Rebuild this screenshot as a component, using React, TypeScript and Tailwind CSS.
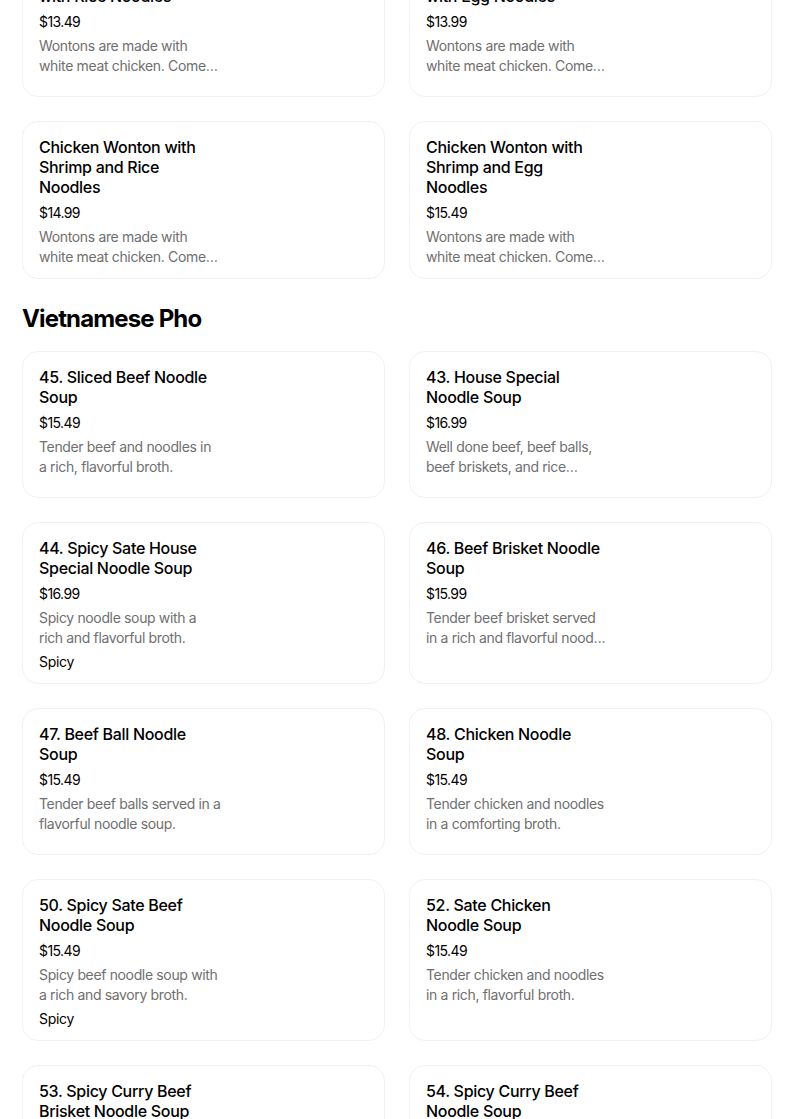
import React from "react";

interface Item {
  name: string;
  price: string;
  desc: string;
  tag?: string;
}

const topItems: Item[] = [
  {
    name: "Chicken Wonton Soup with Rice Noodles",
    price: "$13.49",
    desc: "Wontons are made with white meat chicken. Comes with bok choy and scallions.",
  },
  {
    name: "Chicken Wonton Soup with Egg Noodles",
    price: "$13.99",
    desc: "Wontons are made with white meat chicken. Comes with bok choy and scallions.",
  },
  {
    name: "Chicken Wonton with Shrimp and Rice Noodles",
    price: "$14.99",
    desc: "Wontons are made with white meat chicken. Comes with shrimp and bok choy.",
  },
  {
    name: "Chicken Wonton with Shrimp and Egg Noodles",
    price: "$15.49",
    desc: "Wontons are made with white meat chicken. Comes with shrimp and bok choy.",
  },
];

const phoItems: Item[] = [
  {
    name: "45. Sliced Beef Noodle Soup",
    price: "$15.49",
    desc: "Tender beef and noodles in a rich, flavorful broth.",
  },
  {
    name: "43. House Special Noodle Soup",
    price: "$16.99",
    desc: "Well done beef, beef balls, beef briskets, and rice noodles in a savory broth.",
  },
  {
    name: "44. Spicy Sate House Special Noodle Soup",
    price: "$16.99",
    desc: "Spicy noodle soup with a rich and flavorful broth.",
    tag: "Spicy",
  },
  {
    name: "46. Beef Brisket Noodle Soup",
    price: "$15.99",
    desc: "Tender beef brisket served in a rich and flavorful noodle soup.",
  },
  {
    name: "47. Beef Ball Noodle Soup",
    price: "$15.49",
    desc: "Tender beef balls served in a flavorful noodle soup.",
  },
  {
    name: "48. Chicken Noodle Soup",
    price: "$15.49",
    desc: "Tender chicken and noodles in a comforting broth.",
  },
  {
    name: "50. Spicy Sate Beef Noodle Soup",
    price: "$15.49",
    desc: "Spicy beef noodle soup with a rich and savory broth.",
    tag: "Spicy",
  },
  {
    name: "52. Sate Chicken Noodle Soup",
    price: "$15.49",
    desc: "Tender chicken and noodles in a rich, flavorful broth.",
  },
  {
    name: "53. Spicy Curry Beef Brisket Noodle Soup",
    price: "$16.49",
    desc: "Spicy curry broth with tender beef brisket and noodles.",
    tag: "Spicy",
  },
  {
    name: "54. Spicy Curry Beef Noodle Soup",
    price: "$15.99",
    desc: "Spicy curry broth with tender beef and noodles.",
    tag: "Spicy",
  },
];

function MenuCard({ item }: { item: Item }) {
  return (
    <div className="rounded-2xl border border-[#f1f1f1] bg-white pl-4 pr-4 pt-[15px] pb-[11px]">
      <div className="flex min-h-[119px] flex-col w-[182px]">
        {/* Name */}
        <div className="w-[178px] text-[16px] leading-5 font-medium tracking-[-0.3px] text-[#000]">
          {item.name}
        </div>
        {/* Price */}
        <div className="mt-[6px] text-[14px] leading-5 tracking-[-0.6px] text-[#000]">
          {item.price}
        </div>
        {/* Description */}
        <div className="mt-1 text-[14px] leading-5 tracking-[-0.35px] text-[#6f6f6f] line-clamp-2">
          {item.desc}
        </div>
        {item.tag && (
          <div className="mt-1 text-[14px] leading-5 tracking-[-0.3px] text-[#000]">{item.tag}</div>
        )}
      </div>
    </div>
  );
}

export default function App() {
  return (
    <div
      className="h-[1119px] w-full overflow-hidden bg-white"
      style={{ fontFamily: "Inter, 'Noto Sans', sans-serif" }}
    >
      <div className="-mt-[50px] pl-[22px] pr-[32px]">
        <div className="grid grid-cols-2 gap-6">
          {topItems.map((item) => (
            <MenuCard key={item.name} item={item} />
          ))}
        </div>

        {/* Section heading */}
        <h2 className="mt-[24px] mb-[16px] text-[24px] leading-8 font-bold tracking-[-0.85px] text-[#000]">
          Vietnamese Pho
        </h2>

        <div className="grid grid-cols-2 gap-6">
          {phoItems.map((item) => (
            <MenuCard key={item.name} item={item} />
          ))}
        </div>
      </div>
    </div>
  );
}
